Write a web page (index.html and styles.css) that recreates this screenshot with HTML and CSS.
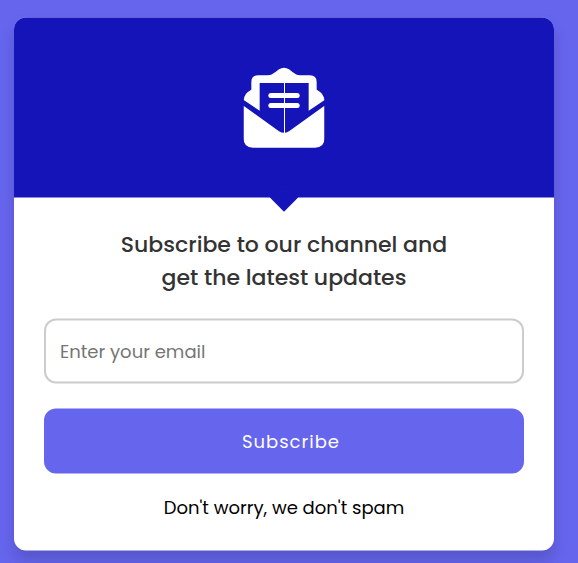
FILE: index.html
```html
<!DOCTYPE html>
<html lang="en">
<head>
<meta charset="utf-8">
<title>Subscribe</title>
<link rel="stylesheet" href="styles.css">
</head>
<body>
<main class="card">
  <header class="card-header">
    <svg class="icon" viewBox="40.5 36 243 243" aria-hidden="true">
      <path fill="#fff" fill-rule="evenodd" d="M41 135C43 121 50 111 64 104V81Q64 61 84 61H114C127 61 137 50 147 43Q162 34 177 43C187 50 197 61 210 61H240Q260 61 260 81V104C274 111 281 121 284 135L236 167V84H89V167Z"/>
      <path fill="#fff" d="M40.500 152L147 229Q162 238 177 229L283.500 152V250Q283.500 278 255 278H69Q40.500 278 40.500 250Z"/>
      <rect fill="#fff" x="162" y="84" width="3" height="151"/>
      <rect fill="#fff" x="115" y="114" width="94" height="15" rx="7.500"/>
      <rect fill="#fff" x="115" y="144" width="94" height="15" rx="7.500"/>
    </svg>
  </header>
  <form class="card-body">
    <h1 class="title">Subscribe to our channel and<br>get the latest updates</h1>
    <input class="email" type="email" placeholder="Enter your email" aria-label="Email">
    <button class="submit" type="button">Subscribe</button>
    <p class="note">Don't worry, we don't spam</p>
  </form>
</main>
</body>
</html>
```

FILE: styles.css
```css
* {
  box-sizing: border-box;
  margin: 0;
  padding: 0;
  font-family: Poppins, Inter, sans-serif;
}

body {
  display: flow-root;
  height: 563px;
  overflow: hidden;
  background: #6665ee;
}

.card {
  width: 540px;
  margin: 18px 0 0 14px;
  border-radius: 12px;
  background: #fff;
  box-shadow: 0 10px 15px rgba(0, 0, 0, 0.15);
  transform: translateY(-0.5px);
}

.card-header {
  position: relative;
  display: flex;
  align-items: center;
  justify-content: center;
  height: 180px;
  border-radius: 12px 12px 0 0;
  background: #1414b8;
}

.card-header::after {
  content: "";
  position: absolute;
  bottom: -10px;
  left: calc(50% - 10px);
  width: 20px;
  height: 20px;
  background: #1414b8;
  transform: rotate(45deg);
}

.icon {
  width: 81px;
  height: 81px;
  transform: translate(-0.5px, -0.5px);
}

.card-body {
  display: flex;
  flex-direction: column;
  padding: 30px;
  text-align: center;
}

.title {
  font-size: 22px;
  font-weight: 500;
  line-height: 33px;
  color: #333;
}

.email {
  height: 65px;
  margin-top: 25px;
  padding: 0 14px;
  border: 2px solid #ccc;
  border-radius: 12px;
  font-size: 18px;
}

.email::placeholder {
  color: #757575;
}

.submit {
  height: 65px;
  margin-top: 25px;
  padding-left: 14px;
  border: 0;
  border-radius: 12px;
  background: #6665ee;
  color: #fff;
  font-size: 18px;
  letter-spacing: 1px;
}

.note {
  margin-top: 20px;
  font-size: 18px;
  line-height: 27px;
}
```
